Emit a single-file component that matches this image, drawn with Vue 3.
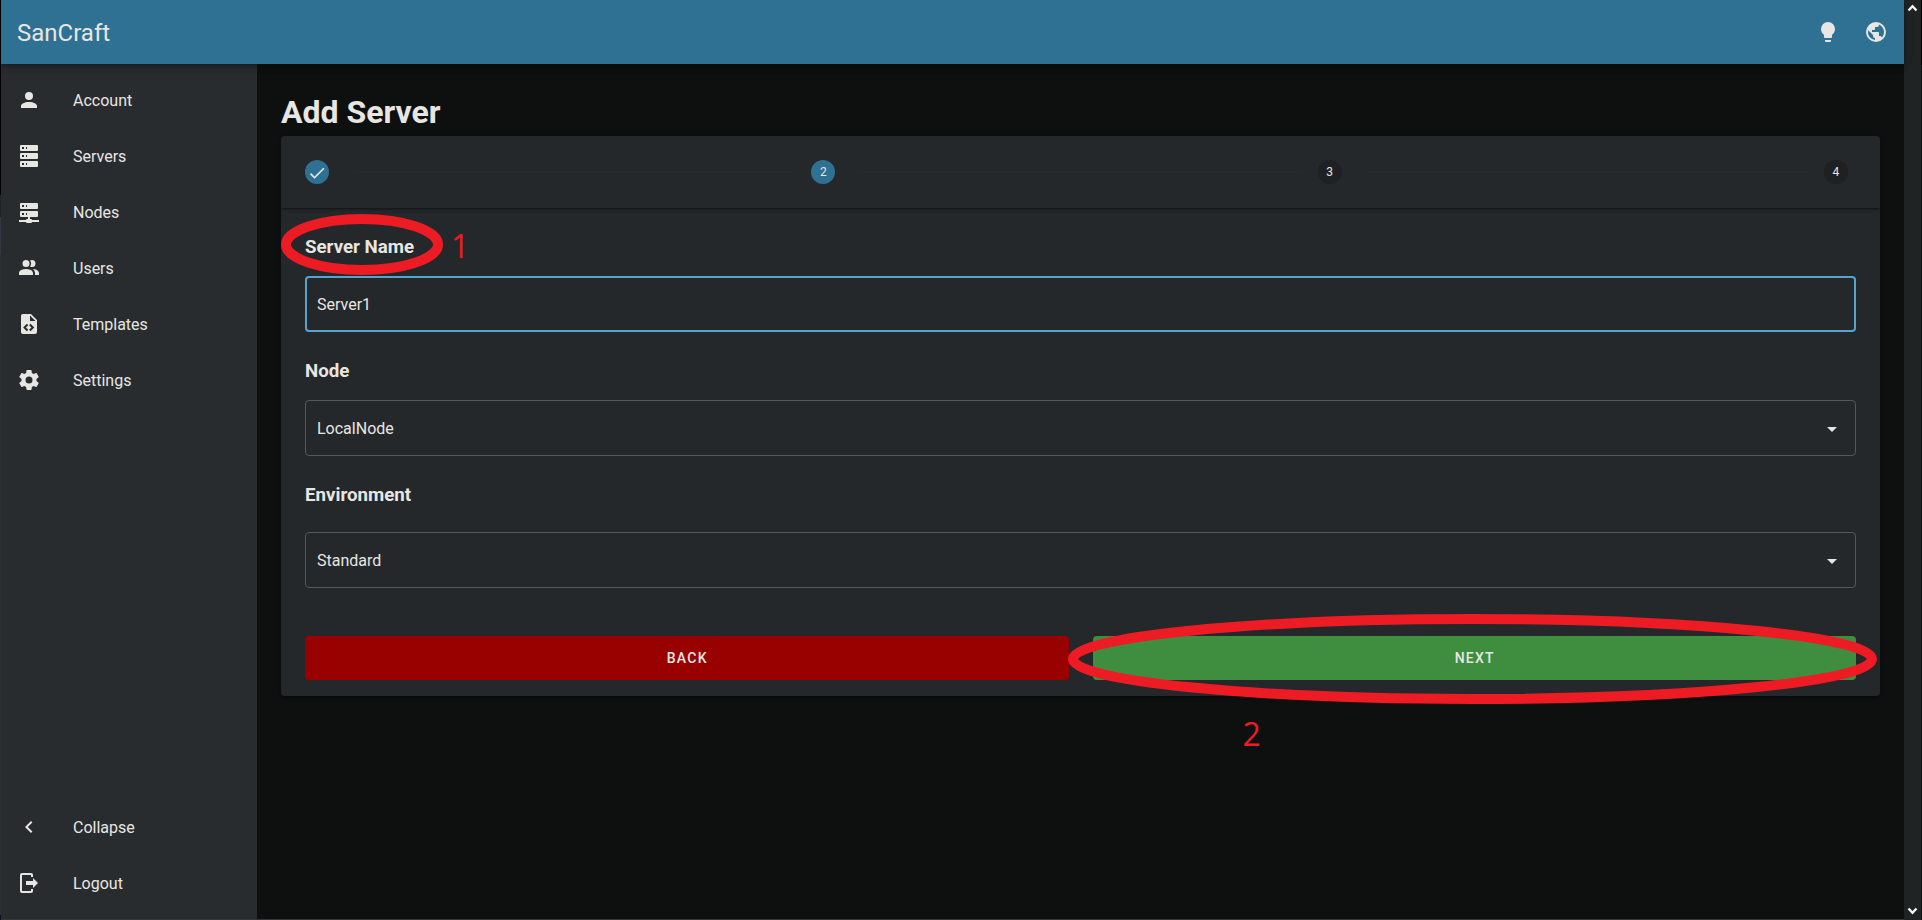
<script setup>
const icons = {
  account: 'M12,4A4,4 0 0,1 16,8A4,4 0 0,1 12,12A4,4 0 0,1 8,8A4,4 0 0,1 12,4M12,14C16.42,14 20,15.79 20,18V20H4V18C4,15.79 7.58,14 12,14Z',
  server: 'M4,1H20A1,1 0 0,1 21,2V6A1,1 0 0,1 20,7H4A1,1 0 0,1 3,6V2A1,1 0 0,1 4,1M4,9H20A1,1 0 0,1 21,10V14A1,1 0 0,1 20,15H4A1,1 0 0,1 3,14V10A1,1 0 0,1 4,9M4,17H20A1,1 0 0,1 21,18V22A1,1 0 0,1 20,23H4A1,1 0 0,1 3,22V18A1,1 0 0,1 4,17M9,5H10V3H9V5M9,13H10V11H9V13M9,21H10V19H9V21M5,3V5H7V3H5M5,11V13H7V11H5M5,19V21H7V19H5Z',
  network: 'M13,19H14A1,1 0 0,1 15,20H22V22H15A1,1 0 0,1 14,23H10A1,1 0 0,1 9,22H2V20H9A1,1 0 0,1 10,19H11V17H4A1,1 0 0,1 3,16V12A1,1 0 0,1 4,11H20A1,1 0 0,1 21,12V16A1,1 0 0,1 20,17H13V19M4,3H20A1,1 0 0,1 21,4V8A1,1 0 0,1 20,9H4A1,1 0 0,1 3,8V4A1,1 0 0,1 4,3M9,7H10V5H9V7M9,15H10V13H9V15M5,5V7H7V5H5M5,13V15H7V13H5Z',
  users: 'M16 17V19H2V17S2 13 9 13 16 17 16 17M12.5 7.5A3.5 3.5 0 1 0 9 11A3.5 3.5 0 0 0 12.5 7.5M15.94 13A5.32 5.32 0 0 1 18 17V19H22V17S22 13.37 15.94 13M15 4A3.39 3.39 0 0 0 13.07 4.59A5 5 0 0 1 13.07 10.41A3.39 3.39 0 0 0 15 11A3.5 3.5 0 0 0 15 4Z',
  file: 'M13,9H18.5L13,3.5V9M6,2H14L20,8V20A2,2 0 0,1 18,22H6C4.89,22 4,21.1 4,20V4C4,2.89 4.89,2 6,2M6.12,15.5L9.86,19.24L11.28,17.83L8.95,15.5L11.28,13.17L9.86,11.76L6.12,15.5M17.28,15.5L13.54,11.76L12.12,13.17L14.45,15.5L12.12,17.83L13.54,19.24L17.28,15.5Z',
  cog: 'M12,15.5A3.5,3.5 0 0,1 8.5,12A3.5,3.5 0 0,1 12,8.5A3.5,3.5 0 0,1 15.5,12A3.5,3.5 0 0,1 12,15.5M19.43,12.97C19.47,12.65 19.5,12.33 19.5,12C19.5,11.67 19.47,11.34 19.43,11L21.54,9.37C21.73,9.22 21.78,8.95 21.66,8.73L19.66,5.27C19.54,5.05 19.27,4.96 19.05,5.05L16.56,6.05C16.04,5.66 15.5,5.32 14.87,5.07L14.5,2.42C14.46,2.18 14.25,2 14,2H10C9.75,2 9.54,2.18 9.5,2.42L9.13,5.07C8.5,5.32 7.96,5.66 7.44,6.05L4.95,5.05C4.73,4.96 4.46,5.05 4.34,5.27L2.34,8.73C2.21,8.95 2.27,9.22 2.46,9.37L4.57,11C4.53,11.34 4.5,11.67 4.5,12C4.5,12.33 4.53,12.65 4.57,12.97L2.46,14.63C2.27,14.78 2.21,15.05 2.34,15.27L4.34,18.73C4.46,18.95 4.73,19.03 4.95,18.95L7.44,17.94C7.96,18.34 8.5,18.68 9.13,18.93L9.5,21.58C9.54,21.82 9.75,22 10,22H14C14.25,22 14.46,21.82 14.5,21.58L14.87,18.93C15.5,18.67 16.04,18.34 16.56,17.94L19.05,18.95C19.27,19.03 19.54,18.95 19.66,18.73L21.66,15.27C21.78,15.05 21.73,14.78 21.54,14.63L19.43,12.97Z',
  left: 'M15.41,16.58L10.83,12L15.41,7.41L14,6L8,12L14,18L15.41,16.58Z',
  logout: 'M16,17V14H9V10H16V7L21,12L16,17M14,2A2,2 0 0,1 16,4V6H14V4H5V20H14V18H16V20A2,2 0 0,1 14,22H5A2,2 0 0,1 3,20V4A2,2 0 0,1 5,2H14Z',
  bulb: 'M12,2A7,7 0 0,0 5,9C5,11.38 6.19,13.47 8,14.74V17A1,1 0 0,0 9,18H15A1,1 0 0,0 16,17V14.74C17.81,13.47 19,11.38 19,9A7,7 0 0,0 12,2M9,21A1,1 0 0,0 10,22H14A1,1 0 0,0 15,21V20H9V21Z',
  earth: 'M17.9,17.39C17.64,16.59 16.89,16 16,16H15V13A1,1 0 0,0 14,12H8V10H10A1,1 0 0,0 11,9V7H13A2,2 0 0,0 15,5V4.59C17.93,5.77 20,8.64 20,12C20,14.08 19.2,15.97 17.9,17.39M11,19.93C7.05,19.44 4,16.08 4,12C4,11.38 4.08,10.78 4.21,10.21L9,15V16A2,2 0 0,0 11,18M12,2A10,10 0 0,0 2,12A10,10 0 0,0 12,22A10,10 0 0,0 22,12A10,10 0 0,0 12,2Z',
  down: 'M7,10L12,15L17,10H7Z',
  check: 'M21,7L9,19L3.5,13.5L4.91,12.09L9,16.17L19.59,5.59L21,7Z',
}
const nav = [
  ['account', 'Account'],
  ['server', 'Servers'],
  ['network', 'Nodes'],
  ['users', 'Users'],
  ['file', 'Templates'],
  ['cog', 'Settings'],
]
const footerNav = [
  ['left', 'Collapse'],
  ['logout', 'Logout'],
]
</script>

<template>
  <div class="window">
    <div class="left-edge"></div>
    <div class="app">
      <header class="bar">
        <span class="brand">SanCraft</span>
        <svg class="icon" viewBox="0 0 24 24"><path :d="icons.bulb" /></svg>
        <svg class="icon" viewBox="0 0 24 24"><path :d="icons.earth" /></svg>
      </header>
      <div class="body">
        <nav class="side">
          <a v-for="[icon, label] in nav" :key="label" class="item">
            <svg class="icon" viewBox="0 0 24 24"><path fill-rule="evenodd" :d="icons[icon]" /></svg>
            <span>{{ label }}</span>
          </a>
          <div class="spacer"></div>
          <a v-for="[icon, label] in footerNav" :key="label" class="item">
            <svg class="icon" viewBox="0 0 24 24"><path :d="icons[icon]" /></svg>
            <span>{{ label }}</span>
          </a>
        </nav>
        <main class="content">
          <h1>Add Server</h1>
          <section class="card">
            <div class="steps">
              <div class="step active">
                <svg class="check" viewBox="0 0 24 24"><path :d="icons.check" /></svg>
              </div>
              <hr />
              <div class="step active">2</div>
              <hr />
              <div class="step">3</div>
              <hr />
              <div class="step">4</div>
            </div>
            <div class="form">
              <h3>
                Server Name
                <svg class="ring ring-name" viewBox="0 0 162 61"><ellipse cx="81" cy="30.5" rx="76" ry="25.5" /></svg>
                <span class="mark mark-one">1</span>
              </h3>
              <div class="field focused">Server1</div>
              <h3>Node</h3>
              <div class="field">
                LocalNode
                <svg class="icon arrow" viewBox="0 0 24 24"><path :d="icons.down" /></svg>
              </div>
              <h3 class="env">Environment</h3>
              <div class="field">
                Standard
                <svg class="icon arrow" viewBox="0 0 24 24"><path :d="icons.down" /></svg>
              </div>
              <div class="actions">
                <button class="back">BACK</button>
                <button class="next">
                  NEXT
                  <svg class="ring ring-next" viewBox="0 0 809 90"><ellipse cx="404.5" cy="45" rx="399.5" ry="40" /></svg>
                  <span class="mark mark-two">2</span>
                </button>
              </div>
            </div>
          </section>
        </main>
      </div>
      <div class="bottom-edge"></div>
    </div>
    <div class="scroll">
      <svg viewBox="0 0 17 12"><path d="M4.5 10.5L8.5 6.2L12.5 10.5" /></svg>
      <svg viewBox="0 0 17 12"><path d="M4.5 1.5L8.5 5.8L12.5 1.5" /></svg>
    </div>
    <div class="right-edge"></div>
  </div>
</template>

<style>
body { background: #0e100f; overflow: hidden; }
</style>

<style scoped>
* { box-sizing: border-box; }
.window {
  display: flex;
  height: 920px;
  font-family: Roboto, sans-serif;
  font-size: 16px;
  color: #e8e6e3;
}
.left-edge { width: 1px; background: linear-gradient(#000 195px, #1f2326 195px 217px, #343841 217px 255px, #2b2f32 255px 915px, #070f1e 915px); }
.right-edge { width: 1px; background: linear-gradient(#000 65px, #101314 65px); }
.app { flex: 1; display: flex; flex-direction: column; min-width: 0; }
.icon { width: 24px; height: 24px; fill: currentColor; flex: none; display: block; }
.bar {
  height: 64px;
  flex: none;
  display: flex;
  align-items: center;
  gap: 24px;
  padding: 0 16px;
  background: #2e7193;
  box-shadow: 0 2px 4px -1px rgba(0, 0, 0, 0.2), 0 4px 5px rgba(0, 0, 0, 0.14), 0 1px 10px rgba(0, 0, 0, 0.12);
  position: relative;
  z-index: 1;
}
.brand { flex: 1; font-size: 24px; line-height: 32px; padding-top: 1px; }
.body { flex: 1; display: flex; min-height: 0; }
.side { width: 256px; background: #292c2f; padding: 8px 0; display: flex; flex-direction: column; }
.item { height: 56px; display: flex; align-items: center; gap: 32px; padding: 0 16px; line-height: 24px; }
.item span { padding-top: 1px; }
.spacer { flex: 1; }
.content { flex: 1; padding: 24px 24px 0; }
h1 { margin: 0; font-size: 32px; line-height: 48px; font-weight: 700; }
.card {
  height: 560px;
  background: #24282a;
  border-radius: 4px;
  box-shadow: 0 3px 1px -2px rgba(0, 0, 0, 0.2), 0 2px 2px rgba(0, 0, 0, 0.14), 0 1px 5px rgba(0, 0, 0, 0.12);
}
.steps {
  height: 72px;
  display: flex;
  align-items: center;
  padding: 0 32px 0 24px;
  box-shadow: 0 3px 1px -2px rgba(0, 0, 0, 0.2), 0 2px 2px rgba(0, 0, 0, 0.14), 0 1px 5px rgba(0, 0, 0, 0.12);
  clip-path: inset(0 0 -6px 0);
}
.step {
  width: 24px;
  height: 24px;
  border-radius: 50%;
  background: #1e2021;
  display: flex;
  align-items: center;
  justify-content: center;
  font-size: 12px;
  flex: none;
}
.step.active { background: #2e7193; }
.check { width: 20px; height: 20px; fill: currentColor; margin-top: 1px; }
.steps hr { flex: 1; height: 1px; border: 0; background: #272b2d; margin: 0 16px 0 24px; }
.form { padding: 24px 24px 16px; }
h3 { position: relative; margin: 0 0 28px; height: 16px; line-height: 30px; font-size: 18.72px; font-weight: 700; }
.field {
  position: relative;
  height: 56px;
  margin-bottom: 24px;
  border: 1px solid #53585a;
  border-radius: 4px;
  padding: 0 11px;
  display: flex;
  align-items: center;
  justify-content: space-between;
}
.field.focused { border: 2px solid #58a3cb; padding: 0 10px; }
.arrow { margin-top: 2px; }
h3.env { margin-bottom: 36px; }
.actions { display: flex; gap: 24px; margin-top: 48px; }
button {
  position: relative;
  flex: 1;
  height: 44px;
  border: 0;
  border-radius: 4px;
  padding: 0 0 0 1px;
  font: 500 14px Roboto, sans-serif;
  letter-spacing: 1.25px;
  color: #e8e6e3;
}
.back { background: #990000; }
.next { background: #3f8e40; }
.ring { position: absolute; fill: none; stroke: #ed1c24; stroke-width: 10; }
.ring-name { width: 162px; height: 61px; left: -24px; top: -18px; }
.ring-next { width: 809px; height: 90px; left: -25px; top: -22px; }
.mark { position: absolute; color: #ed1c24; font: 400 32px/32px "Open Sans", "Noto Sans", sans-serif; letter-spacing: 0; }
.mark-one { left: 146px; top: -2px; }
.mark-two { left: 150px; top: 82px; }
.bottom-edge { height: 1px; background: #34373a; }
.scroll { width: 17px; background: #202324; display: flex; flex-direction: column; justify-content: space-between; padding: 0 0 1px; }
.scroll svg { width: 17px; height: 12px; fill: none; stroke: #f3f3f3; stroke-width: 2.4; }
</style>
